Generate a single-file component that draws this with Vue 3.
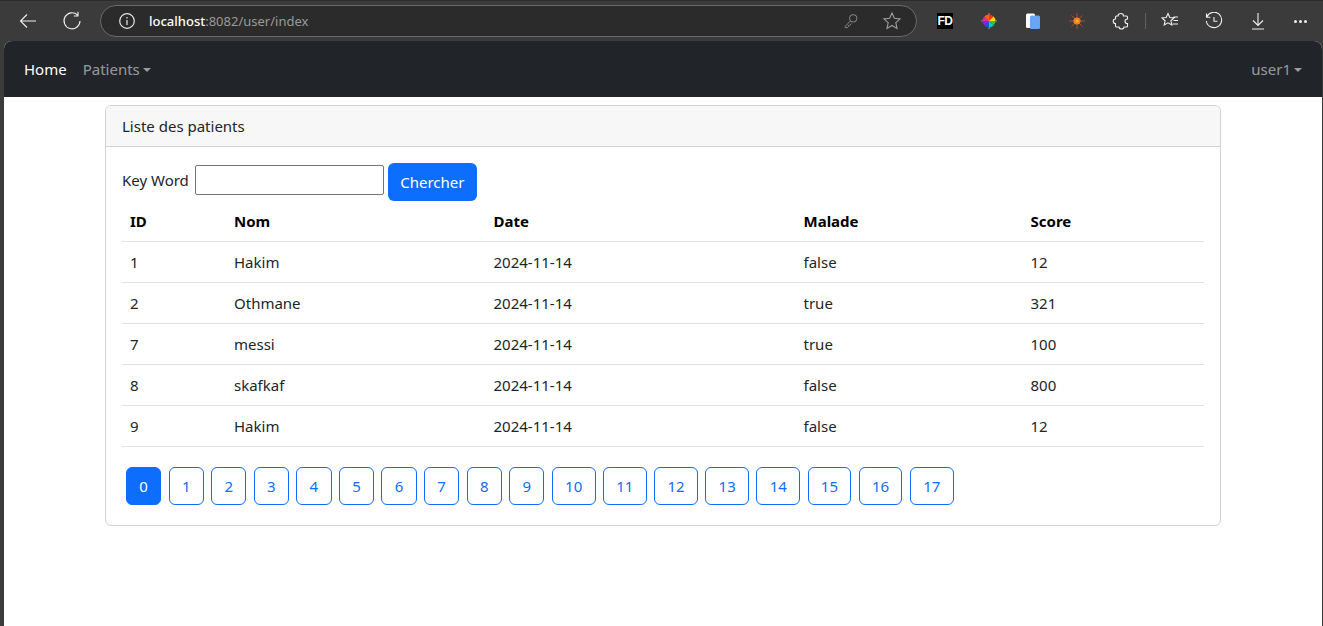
<script setup>
const patients = [
  { id: 1, nom: 'Hakim', date: '2024-11-14', malade: 'false', score: 12 },
  { id: 2, nom: 'Othmane', date: '2024-11-14', malade: 'true', score: 321 },
  { id: 7, nom: 'messi', date: '2024-11-14', malade: 'true', score: 100 },
  { id: 8, nom: 'skafkaf', date: '2024-11-14', malade: 'false', score: 800 },
  { id: 9, nom: 'Hakim', date: '2024-11-14', malade: 'false', score: 12 }
]
const pages = Array.from({ length: 18 }, (_, i) => i)
</script>

<template>
  <div class="window">
    <header class="chrome">
      <button class="tool first" aria-label="Back">
        <svg viewBox="0 0 20 20" width="20" height="20"><path d="M18 10H2.500M9 3.500L2.500 10 9 16.500" /></svg>
      </button>
      <button class="tool reload" aria-label="Reload">
        <svg viewBox="0 0 20 20" width="20" height="20"><path d="M15.500 4A8 8 0 1 0 18 10M16 0.800v4.200h-4.200" /></svg>
      </button>
      <div class="address">
        <svg class="info" viewBox="0 0 18 18" width="18" height="18"><circle cx="9" cy="9" r="7.300" /><path d="M9 8v5M9 5v1.400" /></svg>
        <span class="url"><b>localhost</b>:8082/user/index</span>
        <svg class="key" viewBox="0 0 18 18" width="16" height="16"><circle cx="11.500" cy="6" r="4.200" /><path d="M8.400 9L2.500 15v1.500h2.500l1-1v-1.500h1.500l2-2.200" /></svg>
        <svg class="star" viewBox="0 0 20 20" width="20" height="20"><path d="M10 2l2.400 5.300 5.700.6-4.300 3.800 1.200 5.700L10 14.500l-5 2.900 1.200-5.700L1.900 7.900l5.700-.6z" /></svg>
      </div>
      <div class="extensions">
        <span class="ext-fd">FD</span>
        <svg class="ext wheel" viewBox="0 0 18 18" width="18" height="18">
          <path d="M9 1v16M1 9h16" stroke="#8a8a8a" stroke-width="1.200" fill="none" />
          <path d="M9 9V2.500A6.500 6.500 0 0 1 13.600 4.400z" fill="#ff2a2a" />
          <path d="M9 9l4.600-4.600A6.500 6.500 0 0 1 15.500 9z" fill="#ffdd00" />
          <path d="M9 9h6.500a6.500 6.500 0 0 1-1.900 4.600z" fill="#22cc33" />
          <path d="M9 9l4.600 4.600A6.500 6.500 0 0 1 9 15.500z" fill="#10c8c8" />
          <path d="M9 9v6.500a6.500 6.500 0 0 1-4.600-1.900z" fill="#1a50ee" />
          <path d="M9 9l-4.600 4.600A6.500 6.500 0 0 1 2.500 9z" fill="#8822dd" />
          <path d="M9 9H2.500a6.500 6.500 0 0 1 1.900-4.600z" fill="#ee22aa" />
          <path d="M9 9L4.400 4.400A6.500 6.500 0 0 1 9 2.500z" fill="#ff6600" />
        </svg>
        <svg class="ext" viewBox="0 0 18 18" width="18" height="18">
          <rect x="2" y="1.500" width="9" height="14.500" rx="1.500" fill="#fff" />
          <rect x="6" y="3.500" width="10" height="13.500" rx="1.500" fill="#6aa5f5" />
        </svg>
        <svg class="ext" viewBox="0 0 18 18" width="18" height="18">
          <path d="M9 1v16M1 9h16M3.500 14.500l11-11M3.500 3.500l11 11" stroke="#a8502a" stroke-width="1" fill="none" />
          <circle cx="9" cy="9" r="3.600" fill="#ff7a18" />
          <circle cx="9" cy="9" r="1.600" fill="#ffb030" />
        </svg>
        <svg class="ext line" viewBox="0 0 18 18" width="18" height="18">
          <path d="M6 4C6 2.500 7.300 1.500 8.800 1.500S11.500 2.500 11.500 4H14.500Q15.500 4 15.500 5V7C14 7 13 8 13 9.300S14 11.600 15.500 11.600V14Q15.500 15 14.500 15H12C12 16.200 10.800 17 9.500 17S7 16.200 7 15H4.500Q3.500 15 3.500 14V11.500C2.200 11.500 1.200 10.500 1.200 9.200S2.200 7 3.500 7V5Q3.500 4 4.500 4Z" />
        </svg>
        <span class="divider"></span>
        <svg class="ext line" viewBox="0 0 18 18" width="18" height="18">
          <path d="M7 1.500l1.800 4 4.200.5-3.100 2.800.9 4.200L7 10.800l-3.800 2.200.9-4.200L1 6l4.200-.5zM12.500 5H17M12.500 8.500H17M11.500 12H17" />
        </svg>
        <svg class="ext line" viewBox="0 0 18 18" width="18" height="18">
          <path d="M1.800 5A7.700 7.700 0 1 1 1.300 9M1.500 1.500V5.300h3.800M9 5v4.300h3.400" />
        </svg>
        <svg class="ext line" viewBox="0 0 18 18" width="18" height="18">
          <path d="M9 1v12M4 8.500L9 13.500l5-5M3 17h12" />
        </svg>
        <span class="more"><i></i><i></i><i></i></span>
      </div>
    </header>

    <main class="page">
      <nav class="navbar">
        <div class="nav-left">
          <a class="nav-link active">Home</a>
          <a class="nav-link caret">Patients</a>
        </div>
        <a class="nav-link caret">user1</a>
      </nav>

      <section class="container">
        <div class="card">
          <div class="card-header">Liste des patients</div>
          <div class="card-body">
            <form class="search" @submit.prevent>
              <label for="kw">Key Word</label>
              <input id="kw" type="text" />
              <button class="btn-primary" type="submit">Chercher</button>
            </form>
            <table>
              <colgroup>
                <col class="c1" /><col class="c2" /><col class="c3" /><col class="c4" /><col class="c5" />
              </colgroup>
              <thead>
                <tr><th>ID</th><th>Nom</th><th>Date</th><th>Malade</th><th>Score</th></tr>
              </thead>
              <tbody>
                <tr v-for="p in patients" :key="p.id">
                  <td>{{ p.id }}</td>
                  <td>{{ p.nom }}</td>
                  <td>{{ p.date }}</td>
                  <td>{{ p.malade }}</td>
                  <td>{{ p.score }}</td>
                </tr>
              </tbody>
            </table>
            <ul class="pagination">
              <li v-for="n in pages" :key="n">
                <a class="page-btn" :class="{ current: n === 0 }">{{ n }}</a>
              </li>
            </ul>
          </div>
        </div>
      </section>
    </main>
  </div>
</template>

<style>
html, body { margin: 0; background: #3b3b3b; }
</style>

<style scoped>
.window {
  width: 1323px;
  height: 626px;
  overflow: hidden;
  display: flex;
  flex-direction: column;
  background: #3b3b3b;
  font-family: "Noto Sans", "Open Sans", sans-serif;
  font-size: 15px;
  color: #212529;
}
.chrome {
  height: 41px;
  flex: none;
  display: flex;
  align-items: center;
  box-sizing: border-box;
  padding: 0 0 0 18px;
  border-top: 1px solid #2c2c2c;
}
.tool {
  width: 20px;
  height: 20px;
  padding: 0;
  border: 0;
  background: none;
  display: block;
}
.tool svg { display: block; fill: none; stroke: #efefef; stroke-width: 1.1; }
.reload { margin-left: 24px; }
.address {
  margin-left: 18px;
  width: 817px;
  height: 32px;
  box-sizing: border-box;
  border: 1px solid #6a6a6a;
  border-radius: 16px;
  background: #2b2b2b;
  display: flex;
  align-items: center;
  padding: 0 14px 0 17px;
}
.info { fill: none; stroke: #e8e8e8; stroke-width: 1.2; }
.url {
  margin-left: 13px;
  font-size: 13px;
  color: #9a9a9a;
  flex: 1;
}
.url b { font-weight: 500; color: #fff; }
.key, .star { fill: none; stroke: #8a8a8a; stroke-width: 1.1; }
.star { margin-left: 23px; stroke: #a0a0a0; }
.extensions { display: flex; align-items: center; margin-left: 20px; }
.ext-fd {
  width: 16px;
  height: 16px;
  background: #000;
  color: #fff;
  font: 700 12px/16px "Liberation Sans", sans-serif;
  text-align: center;
  letter-spacing: -0.5px;
}
.ext { margin-left: 26px; flex: none; }
.ext-fd + .ext { margin-left: 27px; }
.line { fill: none; stroke: #efefef; stroke-width: 1.1; }
.divider { width: 1px; height: 16px; background: #5f5f5f; margin-left: 15px; }
.divider + .ext { margin-left: 15px; }
.more { display: flex; gap: 2px; margin-left: 27px; }
.more i { width: 3px; height: 3px; border-radius: 50%; background: #efefef; }

.page {
  flex: 1;
  margin-left: 4px;
  margin-right: 1px;
  background: #fff;
  border-radius: 8px 8px 0 0;
  overflow: hidden;
}
.navbar {
  height: 56px;
  box-sizing: border-box;
  background: #212529;
  display: flex;
  align-items: center;
  justify-content: space-between;
  padding: 0 20px;
}
.nav-left { display: flex; gap: 16px; }
.nav-link { color: rgba(255, 255, 255, 0.55); line-height: 24px; }
.nav-link.active { color: #fff; }
.caret::after {
  content: "";
  display: inline-block;
  margin-left: 3px;
  vertical-align: 3px;
  border-top: 4px solid;
  border-left: 4px solid transparent;
  border-right: 4px solid transparent;
}
.container {
  width: 1116px;
  margin: 8px auto 0;
}
.card {
  border: 1px solid #d1d2d3;
  border-radius: 6px;
  overflow: hidden;
}
.card-header {
  height: 41px;
  box-sizing: border-box;
  padding: 0 16px;
  line-height: 40px;
  background: #f7f7f7;
  border-bottom: 1px solid #d1d2d3;
}
.card-body { padding: 16px; }
.search {
  display: flex;
  align-items: flex-start;
  height: 38px;
}
.search label { line-height: 34px; }
.search input {
  box-sizing: border-box;
  width: 189px;
  height: 30px;
  margin: 2px 4px 0 6px;
  padding: 0 2px;
  border: 1px solid #767676;
  border-radius: 2px;
  background: #fff;
}
.btn-primary {
  width: 89px;
  height: 38px;
  padding: 0;
  border: 0;
  border-radius: 6px;
  background: #0d6efd;
  color: #fff;
  font: inherit;
}
table {
  width: 100%;
  border-collapse: collapse;
  table-layout: fixed;
}
.c1 { width: 104px; }
.c2 { width: 259.5px; }
.c3 { width: 310px; }
.c4 { width: 227px; }
th, td {
  height: 41px;
  box-sizing: border-box;
  padding: 0 8px;
  text-align: left;
  border-bottom: 1px solid #dee2e6;
  color: #212529;
}
th { height: 40px; color: #000; font-weight: 700; }
.pagination {
  list-style: none;
  display: flex;
  gap: 7.4px;
  margin: 20px 0 4px;
  padding: 0 0 0 4px;
}
.page-btn {
  display: block;
  box-sizing: border-box;
  height: 38px;
  min-width: 35px;
  padding: 0 12.3px;
  border: 1px solid #0d6efd;
  border-radius: 6px;
  color: #0d6efd;
  line-height: 36px;
  text-align: center;
}
.page-btn.current { background: #0d6efd; color: #fff; }
</style>
